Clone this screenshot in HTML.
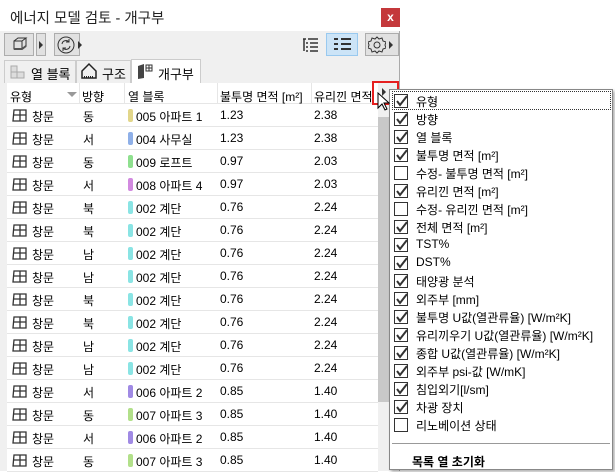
<!DOCTYPE html><html><head><meta charset="utf-8"><style>
*{margin:0;padding:0;box-sizing:border-box}
body{width:615px;height:471px;overflow:hidden;background:#fff;font-family:"Liberation Sans","Noto Sans CJK KR",sans-serif;font-size:12px;color:#000;position:relative}
.a{position:absolute}
.win{left:0;top:0;width:400px;height:471px;background:#f0f0f0;border-right:1px solid #aaa}
.tb{left:0;top:0;width:400px;height:31px;background:#fff}
.btn{border:1px solid #adadad;background:#e1e1e1}
.row{position:absolute;left:7px;width:371px;height:23px;border-bottom:1px solid #e6e6e6;background:#fff}
.row span{position:absolute;top:4px}
.sw{position:absolute;top:5px;width:5px;height:13px;border-radius:2px}
.menu{left:389px;top:89px;width:224px;height:381px;background:#fff;border:1px solid #888;box-shadow:2px 2px 3px rgba(0,0,0,.3)}
.it{position:absolute;left:4px;height:19px;width:215px}
.cb{position:absolute;left:0;top:2px;width:14px;height:14px;border:1px solid #333;background:#fff}
.it span{position:absolute;left:22px;top:1px;font-size:12px}
</style></head><body>
<div class="a win"></div>
<div class="a tb"></div>
<div class="a" style="left:10px;top:7px;font-size:14.5px;color:#222">에너지 모델 검토 - 개구부</div>
<div class="a" style="left:381px;top:8px;width:19px;height:19px;background:#c4383b;color:#fff;font-size:12px;text-align:center;line-height:18px;font-weight:bold">x</div>
<div class="a btn" style="left:4px;top:33px;width:30px;height:23px"></div>
<svg class="a" style="left:11px;top:36px" width="18" height="17"><path d="M3 5h8v8H3zM3 5l4-3h8l-4 3M11 13l4-3V2" fill="none" stroke="#333"/><path d="M3 13h8l4-3" stroke="#555" stroke-width="2" fill="none"/></svg>
<div class="a btn" style="left:36px;top:33px;width:10px;height:23px"></div>
<div class="a" style="left:39px;top:41px;border-left:4px solid #333;border-top:4px solid transparent;border-bottom:4px solid transparent"></div>
<div class="a btn" style="left:54px;top:33px;width:26px;height:23px"></div>
<svg class="a" style="left:56px;top:35px" width="20" height="20"><circle cx="10" cy="10" r="8" fill="none" stroke="#333"/><path d="M6 9a4 4 0 0 1 7-2M14 11a4 4 0 0 1-7 2" fill="none" stroke="#333"/><path d="M13 4v3h-3M7 16v-3h3" fill="none" stroke="#333"/></svg>
<div class="a" style="left:78px;top:41px;border-left:4px solid #333;border-top:4px solid transparent;border-bottom:4px solid transparent"></div>
<svg class="a" style="left:303px;top:38px" width="16" height="14"><path d="M0 1h3M5 1h10M3 5h2M7 5h8M3 9h2M7 9h8M3 13h2M7 13h8M1 1v12" stroke="#333" stroke-width="1.5" fill="none"/></svg>
<div class="a" style="left:326px;top:33px;width:32px;height:23px;background:#cce4f7;border:1px solid #99c9ef"></div>
<svg class="a" style="left:334px;top:38px" width="17" height="14"><path d="M0 1h4M7 1h10M0 6h4M7 6h10M0 11h4M7 11h10" stroke="#333" stroke-width="2"/></svg>
<div class="a btn" style="left:365px;top:33px;width:34px;height:23px"></div>
<svg class="a" style="left:368px;top:36px" width="18" height="18"><circle cx="9" cy="9" r="3" fill="none" stroke="#333"/><path d="M9 1l2 2 3-1 1 3 3 1-1 3 1 3-3 1-1 3-3-1-2 2-2-2-3 1-1-3-3-1 1-3-1-3 3-1 1-3 3 1z" fill="none" stroke="#333"/></svg>
<div class="a" style="left:389px;top:41px;border-left:4px solid #333;border-top:4px solid transparent;border-bottom:4px solid transparent"></div>
<div class="a" style="left:4px;top:60px;width:72px;height:23px;border:1px solid #ccc;border-bottom:none;background:#f0f0f0"></div>
<svg class="a" style="left:9px;top:64px" width="18" height="16"><path d="M2 2h6v6H2zM2 8h6v6H2zM8 8h7v6H8z" fill="#ddd" stroke="#aaa"/></svg>
<div class="a" style="left:31px;top:64px;font-size:13px">열 블록</div>
<div class="a" style="left:76px;top:60px;width:55px;height:23px;border:1px solid #ccc;border-bottom:none;background:#f0f0f0"></div>
<svg class="a" style="left:80px;top:62px" width="18" height="18"><path d="M2 9L9 2l7 7v7H2z" fill="none" stroke="#222" stroke-width="1.5"/><path d="M4 15h10" stroke="#222" stroke-dasharray="1 1" stroke-width="2"/></svg>
<div class="a" style="left:102px;top:64px;font-size:13px">구조</div>
<div class="a" style="left:131px;top:59px;width:70px;height:25px;border:1px solid #ccc;border-bottom:none;background:#fff"></div>
<svg class="a" style="left:136px;top:62px" width="18" height="18"><path d="M2 4l6-2v14l-6 1z" fill="#444"/><path d="M10 3h6v6h-6zM13 3v6M10 6h6" fill="none" stroke="#333"/></svg>
<div class="a" style="left:158px;top:64px;font-size:13px">개구부</div>
<div class="a" style="left:7px;top:83px;width:384px;height:388px;background:#fff;border-left:1px solid #ddd"></div>
<div class="a" style="left:7px;top:83px;width:371px;height:21px;background:#fff;border-bottom:1px solid #e6e6e6;font-size:12px">
<span class="a" style="left:3px;top:5px">유형</span>
<div class="a" style="left:60px;top:9px;border-top:5px solid #999;border-left:5px solid transparent;border-right:5px solid transparent"></div>
<div class="a" style="left:72px;top:0;height:21px;border-left:1px solid #e6e6e6"></div>
<span class="a" style="left:75px;top:5px">방향</span>
<div class="a" style="left:117px;top:0;height:21px;border-left:1px solid #e6e6e6"></div>
<span class="a" style="left:121px;top:5px">열 블록</span>
<div class="a" style="left:210px;top:0;height:21px;border-left:1px solid #e6e6e6"></div>
<span class="a" style="left:213px;top:5px">불투명 면적 [m²]</span>
<div class="a" style="left:304px;top:0;height:21px;border-left:1px solid #e6e6e6"></div>
<span class="a" style="left:307px;top:5px">유리낀 면적</span>
</div>
<div class="a" style="left:378px;top:83px;width:13px;height:388px;background:#f0f0f0"></div>
<div class="a" style="left:378px;top:117px;width:12px;height:285px;background:#c8c8c8"></div>
<div id="rows"></div>
<div class="a" style="left:372px;top:81px;width:27px;height:24px;border:2px solid #e51f1f"></div>
<div class="a" style="left:382px;top:88px;border-left:4px solid #333;border-top:4px solid transparent;border-bottom:4px solid transparent"></div>
<div class="a menu" id="menu">
<div class="a" style="left:2px;top:1px;width:219px;height:19px;border:1px dotted #333"></div>
<div class="a" style="left:2px;top:353px;width:218px;border-top:1px solid #999"></div>
<div class="a" style="left:22px;top:363px;font-weight:bold;font-size:12px">목록 열 초기화</div>
</div>
<svg class="a" style="left:377px;top:92px" width="14" height="20"><path d="M1 1v15l4-4 3 6 2-1-3-6h5z" fill="#fff" stroke="#000"/></svg>
<script>
var R=[["동","#e2d68a","005 아파트 1","1.23","2.38"],["서","#8fb0e8","004 사무실","1.23","2.38"],["동","#8fe08f","009 로프트","0.97","2.03"],["서","#d28ae0","008 아파트 4","0.97","2.03"],["북","#8ae4e4","002 계단","0.76","2.24"],["북","#8ae4e4","002 계단","0.76","2.24"],["남","#8ae4e4","002 계단","0.76","2.24"],["남","#8ae4e4","002 계단","0.76","2.24"],["북","#8ae4e4","002 계단","0.76","2.24"],["북","#8ae4e4","002 계단","0.76","2.24"],["남","#8ae4e4","002 계단","0.76","2.24"],["남","#8ae4e4","002 계단","0.76","2.24"],["서","#a08ae4","006 아파트 2","0.85","1.40"],["동","#b2e08a","007 아파트 3","0.85","1.40"],["서","#a08ae4","006 아파트 2","0.85","1.40"],["동","#b2e08a","007 아파트 3","0.85","1.40"]];
var h="";R.forEach(function(r,i){var t=104+i*23;h+='<div class="row" style="top:'+t+'px"><svg style="position:absolute;left:5px;top:4px" width="16" height="15"><path d="M2 2h12v11H1zM8 2v11M2 7h12" fill="none" stroke="#333" stroke-width="1.3"/></svg><span style="left:25px">창문</span><span style="left:76px">'+r[0]+'</span><div class="sw" style="left:121px;background:'+r[1]+'"></div><span style="left:129px">'+r[2]+'</span><span style="left:213px">'+r[3]+'</span><span style="left:307px">'+r[4]+'</span></div>';});
document.getElementById("rows").innerHTML=h;
var M=[["유형",1],["방향",1],["열 블록",1],["불투명 면적 [m²]",1],["수정- 불투명 면적 [m²]",0],["유리낀 면적 [m²]",1],["수정- 유리낀 면적 [m²]",0],["전체 면적 [m²]",1],["TST%",1],["DST%",1],["태양광 분석",1],["외주부 [mm]",1],["불투명 U값(열관류율) [W/m²K]",1],["유리끼우기 U값(열관류율) [W/m²K]",1],["종합 U값(열관류율) [W/m²K]",1],["외주부 psi-값 [W/mK]",1],["침입외기[l/sm]",1],["차광 장치",1],["리노베이션 상태",0]];
var m="";M.forEach(function(x,i){var t=2+i*18;m+='<div class="it" style="top:'+t+'px"><div class="cb">'+(x[1]?'<svg width="14" height="14" style="position:absolute;left:-1px;top:-1px"><path d="M3 7l3 4 7-9" fill="none" stroke="#333" stroke-width="2"/></svg>':'')+'</div><span>'+x[0]+'</span></div>';});
document.getElementById("menu").insertAdjacentHTML("beforeend",m);
</script>
</body></html>
